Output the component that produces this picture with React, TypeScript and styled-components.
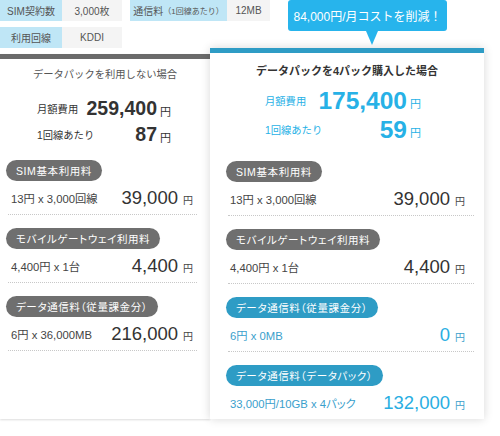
import React from "react";
import styled, { createGlobalStyle } from "styled-components";

const Global = createGlobalStyle`
  html, body { margin: 0; padding: 0; background: #fff; }
  body { font-family: "Liberation Sans", "Noto Sans CJK JP", sans-serif; color: #444; }
  * { box-sizing: border-box; }
`;

const Page = styled.div`
  width: 500px;
  height: 436px;
  display: flex;
  flex-direction: column;
`;

const InfoArea = styled.div`
  display: flex;
  flex-direction: column;
  gap: 6px;
`;

const InfoRow = styled.div`
  display: flex;
  gap: 8px;
`;

const InfoGroup = styled.div`
  display: flex;
`;

const InfoLabel = styled.div<{ $w: number }>`
  width: ${(p) => p.$w}px;
  height: 21px;
  background: #bfe6f6;
  color: #555;
  font-size: 10px;
  display: flex;
  align-items: center;
  justify-content: center;
  white-space: nowrap;
`;

const Small = styled.span`
  font-size: 8px;
`;

const InfoValue = styled.div<{ $w: number }>`
  width: ${(p) => p.$w}px;
  height: 21px;
  background: #f4f4f4;
  color: #555;
  font-size: 10px;
  display: flex;
  align-items: center;
  justify-content: center;
`;

const CardsRow = styled.div`
  display: flex;
  align-items: stretch;
  height: 371px;
`;

const Card = styled.div<{ $featured?: boolean }>`
  position: relative;
  width: ${(p) => (p.$featured ? 274 : 210)}px;
  margin-top: ${(p) => (p.$featured ? 0 : 6)}px;
  background: #fff;
  border-top: 5px solid ${(p) => (p.$featured ? "#2e9cc5" : "#6b6b6b")};
  box-shadow: ${(p) =>
    p.$featured ? "0 0 9px rgba(0,0,0,0.16)" : "0 1px 2px rgba(0,0,0,0.14)"};
  display: flex;
  flex-direction: column;
  z-index: ${(p) => (p.$featured ? 1 : 0)};
`;

const Bubble = styled.div`
  position: absolute;
  left: 78px;
  top: -53px;
  width: 159px;
  height: 31px;
  background: #27b4ec;
  border-radius: 3px;
  color: #fff;
  font-size: 12px;
  display: flex;
  align-items: center;
  justify-content: center;
  &::after {
    content: "";
    position: absolute;
    left: 78px;
    top: 31px;
    border-left: 6px solid transparent;
    border-right: 6px solid transparent;
    border-top: 14px solid #27b4ec;
  }
`;

const Title = styled.div<{ $featured?: boolean }>`
  margin-top: ${(p) => (p.$featured ? 10 : 8)}px;
  line-height: 16px;
  text-align: center;
  font-size: ${(p) => (p.$featured ? 11 : 10.3)}px;
  font-weight: ${(p) => (p.$featured ? 700 : 400)};
  color: ${(p) => (p.$featured ? "#333" : "#555")};
`;

const Summary = styled.div<{ $featured?: boolean }>`
  margin-top: ${(p) => (p.$featured ? 7 : 12)}px;
  margin-left: ${(p) => (p.$featured ? 55 : 37)}px;
  width: ${(p) => (p.$featured ? 156 : 134)}px;
  display: flex;
  flex-direction: column;
  color: ${(p) => (p.$featured ? "#27b1e6" : "#333")};
`;

const SummaryRow = styled.div<{ $featured?: boolean }>`
  height: ${(p) => (p.$featured ? 29 : 26)}px;
  display: flex;
  align-items: center;
`;

const SummaryLabel = styled.span`
  flex: 1;
  font-size: 10.3px;
`;

const SummaryNumber = styled.span<{ $featured?: boolean }>`
  font-size: ${(p) => (p.$featured ? 24.5 : 19.5)}px;
  font-weight: 700;
`;

const SummaryUnit = styled.span`
  font-size: 11px;
  margin-left: 3px;
  margin-top: 5px;
`;

const Section = styled.div`
  display: flex;
  flex-direction: column;
  align-items: flex-start;
`;

const Row = styled.div<{ $featured?: boolean; $blue?: boolean }>`
  align-self: stretch;
  margin-left: 2px;
  height: 34px;
  padding: ${(p) => (p.$featured ? "0 9px 0 2px" : "0 4px 0 3px")};
  border-bottom: 1px dotted #c8c8c8;
  display: flex;
  align-items: center;
  justify-content: space-between;
  color: ${(p) => (p.$blue ? "#3aa0cc" : "#444")};
`;

const Sections = styled.div<{ $featured?: boolean }>`
  margin-top: ${(p) => (p.$featured ? 17 : 13)}px;
  padding: ${(p) => (p.$featured ? "0 10px 0 16px" : "0 13px 0 6px")};
  display: flex;
  flex-direction: column;
  gap: 13px;
  ${(p) =>
    p.$featured &&
    `& > ${Section}:last-child > ${Row} { border-bottom-color: transparent; }`}
`;

const Pill = styled.div<{ $blue?: boolean }>`
  height: 21px;
  padding: 0 10px;
  border-radius: 11px;
  background: ${(p) => (p.$blue ? "#2e9cc5" : "#6f6f6f")};
  color: #fff;
  font-size: 10.5px;
  letter-spacing: 0.6px;
  font-feature-settings: "palt";
  display: flex;
  align-items: center;
  white-space: nowrap;
`;

const RowText = styled.span`
  font-size: 11.3px;
  font-feature-settings: "palt";
`;

const Amount = styled.span`
  display: flex;
  align-items: baseline;
`;

const AmountNumber = styled.span<{ $blue?: boolean }>`
  font-size: 18.5px;
  color: ${(p) => (p.$blue ? "#29aee2" : "#333")};
`;

const AmountUnit = styled.span`
  font-size: 10px;
  margin-left: 5px;
`;

type Item = { label: string; detail: string; amount: string; blue?: boolean };

const leftItems: Item[] = [
  { label: "SIM基本利用料", detail: "13円 x 3,000回線", amount: "39,000" },
  { label: "モバイルゲートウェイ利用料", detail: "4,400円 x 1台", amount: "4,400" },
  { label: "データ通信料（従量課金分）", detail: "6円 x 36,000MB", amount: "216,000" },
];

const rightItems: Item[] = [
  { label: "SIM基本利用料", detail: "13円 x 3,000回線", amount: "39,000" },
  { label: "モバイルゲートウェイ利用料", detail: "4,400円 x 1台", amount: "4,400" },
  { label: "データ通信料（従量課金分）", detail: "6円 x 0MB", amount: "0", blue: true },
  {
    label: "データ通信料（データパック）",
    detail: "33,000円/10GB x 4パック",
    amount: "132,000",
    blue: true,
  },
];

function PlanCard(props: {
  featured?: boolean;
  title: string;
  monthly: string;
  perLine: string;
  items: Item[];
  children?: React.ReactNode;
}) {
  const { featured, title, monthly, perLine, items } = props;
  return (
    <Card $featured={featured}>
      {props.children}
      <Title $featured={featured}>{title}</Title>
      <Summary $featured={featured}>
        <SummaryRow $featured={featured}>
          <SummaryLabel>月額費用</SummaryLabel>
          <SummaryNumber $featured={featured}>{monthly}</SummaryNumber>
          <SummaryUnit>円</SummaryUnit>
        </SummaryRow>
        <SummaryRow $featured={featured}>
          <SummaryLabel>1回線あたり</SummaryLabel>
          <SummaryNumber $featured={featured}>{perLine}</SummaryNumber>
          <SummaryUnit>円</SummaryUnit>
        </SummaryRow>
      </Summary>
      <Sections $featured={featured}>
        {items.map((it) => (
          <Section key={it.label}>
            <Pill $blue={it.blue}>{it.label}</Pill>
            <Row $featured={featured} $blue={it.blue}>
              <RowText>{it.detail}</RowText>
              <Amount>
                <AmountNumber $blue={it.blue}>{it.amount}</AmountNumber>
                <AmountUnit>円</AmountUnit>
              </Amount>
            </Row>
          </Section>
        ))}
      </Sections>
    </Card>
  );
}

export default function App() {
  return (
    <>
      <Global />
      <Page>
        <InfoArea>
          <InfoRow>
            <InfoGroup>
              <InfoLabel $w={62}>SIM契約数</InfoLabel>
              <InfoValue $w={60}>3,000枚</InfoValue>
            </InfoGroup>
            <InfoGroup>
              <InfoLabel $w={97}>
                通信料<Small>（1回線あたり）</Small>
              </InfoLabel>
              <InfoValue $w={43}>12MB</InfoValue>
            </InfoGroup>
          </InfoRow>
          <InfoRow>
            <InfoGroup>
              <InfoLabel $w={62}>利用回線</InfoLabel>
              <InfoValue $w={60}>KDDI</InfoValue>
            </InfoGroup>
          </InfoRow>
        </InfoArea>
        <CardsRow>
          <PlanCard
            title="データパックを利用しない場合"
            monthly="259,400"
            perLine="87"
            items={leftItems}
          />
          <PlanCard
            featured
            title="データパックを4パック購入した場合"
            monthly="175,400"
            perLine="59"
            items={rightItems}
          >
            <Bubble>84,000円/月コストを削減！</Bubble>
          </PlanCard>
        </CardsRow>
      </Page>
    </>
  );
}
